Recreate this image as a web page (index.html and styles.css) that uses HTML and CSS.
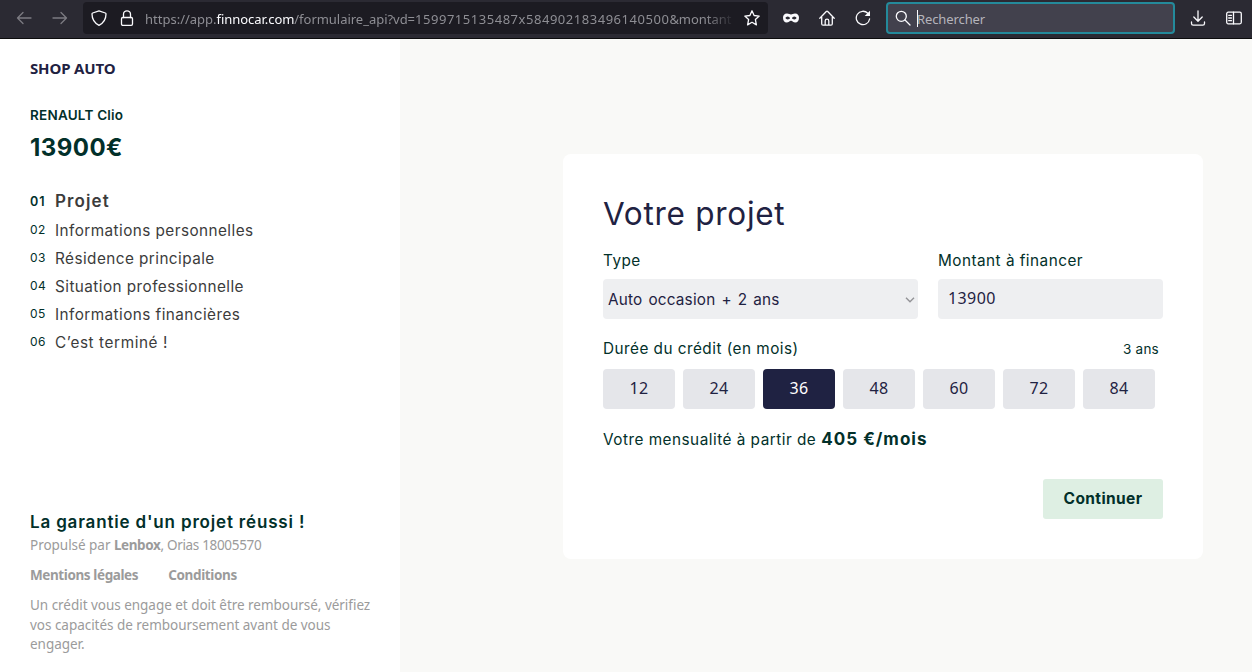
FILE: index.html
```html
<!DOCTYPE html>
<html lang="fr">
<head>
<meta charset="utf-8">
<title>Votre projet</title>
<link rel="stylesheet" href="styles.css">
</head>
<body>
<header class="toolbar">
  <svg class="icon back" viewBox="0 0 16 16"><path d="M15 8H1.5M7 2.5 1.5 8 7 13.5"/></svg>
  <svg class="icon forward" viewBox="0 0 16 16"><path d="M1 8h13.5M9 2.5 14.5 8 9 13.5"/></svg>
  <div class="urlbar">
    <svg class="icon shield" viewBox="0 0 16 16"><path d="M8 .8 14.3 3c.5.2.7.5.7 1C15 9 12.500 13 8 15.300 3.500 13 1 9 1 4c0-.5.2-.8.7-1z"/></svg>
    <svg class="icon lock" viewBox="0 0 16 16"><rect x="2.500" y="7.500" width="11" height="7.800" rx="1.300"/><path d="M4.500 7.500V4.300a3.500 3.500 0 0 1 7 0v3.200"/></svg>
    <div class="url">https://app.<b>finnocar.com</b><span class="path">/formulaire_api?vd=</span><span class="digits">1599715135487x584902183496140500</span><span class="path">&amp;montant</span></div>
    <svg class="icon star" viewBox="0 0 16 16"><path d="M8 .8 10.100 5.500l5.100.6-3.800 3.500 1 5.300L8 12.300 3.600 14.900l1-5.300L.8 6.100l5.100-.6z"/></svg>
  </div>
  <svg class="icon mask" viewBox="0 0 16 16"><path fill-rule="evenodd" d="M4 3.500c1.800 0 2.800.9 4 .9s2.200-.9 4-.9c2.600 0 4 1.700 4 4.300 0 3-1.500 4.800-3.700 4.800-2 0-2.800-1.900-4.300-1.900s-2.300 1.900-4.300 1.900C1.500 12.600 0 10.800 0 7.800c0-2.600 1.400-4.300 4-4.300zM4.700 6.500c-1 0-2 .8-2.300 1.600.5.800 1.200 1.300 2.300 1.300s2-.5 2.300-1.200c-.3-.9-1.200-1.700-2.300-1.700zm6.600 0c-1.100 0-2 .8-2.300 1.700.3.700 1.200 1.200 2.300 1.200s1.800-.5 2.300-1.300c-.3-.8-1.300-1.600-2.300-1.600z"/></svg>
  <svg class="icon home" viewBox="0 0 16 16"><path d="M.8 8.200 7.300 1.500q.7-.6 1.400 0l6.500 6.700M2.700 7v6.700c0 .9.5 1.500 1.300 1.500h8c.8 0 1.300-.6 1.300-1.500V7M6.200 15V11a1.800 1.800 0 0 1 3.600 0v4"/></svg>
  <svg class="icon reload" viewBox="0 0 16 16"><path d="M14.600 9A6.700 6.700 0 1 1 12.800 3.300"/><path class="solid" d="M15 .8v5.300H9.700z"/></svg>
  <div class="searchbar">
    <svg class="icon lens" viewBox="0 0 16 16"><circle cx="6.300" cy="6.300" r="5"/><path d="M10 10l5 5"/></svg>
    <span class="caret"></span><span class="placeholder">Rechercher</span>
  </div>
  <svg class="icon download" viewBox="0 0 16 16"><path d="M8 .8v10M3.800 7 8 11.200 12.200 7M1.500 12v1.500c0 1 .6 1.700 1.700 1.700h9.600c1.100 0 1.700-.7 1.700-1.700V12"/></svg>
  <svg class="icon sidebar-toggle" viewBox="0 0 16 16"><rect x=".7" y="2.200" width="14.600" height="11.600" rx="1.500"/><path d="M7.500 2.200v11.600M2.700 5.300h2.800M2.700 8h2.800M2.700 10.700h2.800"/></svg>
</header>
<main class="page">
  <aside class="sidebar">
    <div class="shop">SHOP AUTO</div>
    <div class="car">RENAULT Clio</div>
    <div class="price">13900€</div>
    <ol class="steps">
      <li class="current"><span class="num">01</span><span class="label">Projet</span></li>
      <li><span class="num">02</span><span class="label">Informations personnelles</span></li>
      <li><span class="num">03</span><span class="label">Résidence principale</span></li>
      <li><span class="num">04</span><span class="label">Situation professionnelle</span></li>
      <li><span class="num">05</span><span class="label">Informations financières</span></li>
      <li><span class="num">06</span><span class="label">C’est terminé !</span></li>
    </ol>
    <footer class="legal">
      <div class="slogan">La garantie d'un projet réussi !</div>
      <div class="powered">Propulsé par <b>Lenbox</b><span class="orias">, Orias 18005570</span></div>
      <nav class="links"><a>Mentions légales</a><a>Conditions</a></nav>
      <p class="warning">Un crédit vous engage et doit être remboursé, vérifiez vos capacités de remboursement avant de vous engager.</p>
    </footer>
  </aside>
  <section class="content">
    <form class="card">
      <h1>Votre projet</h1>
      <div class="fields">
        <div class="field">
          <label>Type</label>
          <div class="control select"><span>Auto occasion + 2 ans</span><svg class="chevron" viewBox="0 0 10 6"><path d="M1 .8l4 4 4-4"/></svg></div>
        </div>
        <div class="field">
          <label class="amount-label">Montant à financer</label>
          <div class="control amount">13900</div>
        </div>
      </div>
      <div class="duration"><label>Durée du crédit (en mois)</label><span class="years">3 ans</span></div>
      <div class="months">
        <span class="month">12</span><span class="month">24</span><span class="month selected">36</span><span class="month">48</span><span class="month">60</span><span class="month">72</span><span class="month">84</span>
      </div>
      <div class="monthly"><span class="monthly-text">Votre mensualité à partir de</span><strong>405 €/mois</strong></div>
      <div class="actions"><span class="continue">Continuer</span></div>
    </form>
  </section>
</main>
</body>
</html>
```
FILE: styles.css
```css
* { box-sizing: border-box; }
body { margin: 0; height: 672px; overflow: hidden; background: #fff; font-family: Inter, sans-serif; font-size: 15.3px; letter-spacing: .47px; color: #02302a; }

/* Browser toolbar */
.toolbar { display: flex; align-items: center; height: 39px; padding: 0 9px 3px 16px; background: #2b2a33; border-bottom: 1px solid #0c0c0d; font-family: "Noto Sans", sans-serif; font-size: 13px; letter-spacing: 0; }
.icon { flex: none; width: 16px; height: 16px; fill: none; stroke: #fbfbfe; stroke-width: 1.3; stroke-linejoin: round; stroke-linecap: round; }
.back, .forward { stroke: #7c7b82; }
.forward { margin-left: 20px; }
.urlbar { display: flex; align-items: center; width: 685px; height: 32px; margin: 1px 0 0 15px; padding: 0 8px; background: #1c1b22; border-radius: 4px; }
.lock { margin-left: 12px; }
.url { width: 590px; margin: 1px 0 0 10px; white-space: nowrap; color: #8e8e94; -webkit-mask-image: linear-gradient(to right, #000 95%, transparent); mask-image: linear-gradient(to right, #000 95%, transparent); }
.url b { font-weight: 400; letter-spacing: -.05px; color: #fbfbfe; }
.path { letter-spacing: -.03px; }
.digits { letter-spacing: .53px; }
.star { margin-left: 9px; }
.mask { margin-left: 15px; fill: #fbfbfe; stroke: none; }
.home { margin-left: 20px; }
.reload { margin-left: 20px; }
.solid { fill: #fbfbfe; stroke: none; }
.searchbar { display: flex; align-items: center; width: 289px; height: 32px; margin: 1px 0 0 15px; padding-left: 7px; background: #42414d; border: 2px solid #248a9b; border-radius: 4px; color: #b5b4bb; }
.caret { width: 1px; height: 17px; margin-left: 6px; background: #fbfbfe; }
.placeholder { margin: 1px 0 0 -1px; letter-spacing: -.1px; }
.download { margin-left: 15px; }
.sidebar-toggle { margin-left: 20px; }

.page { display: flex; height: 633px; }

/* Left column */
.sidebar { display: flex; flex-direction: column; width: 400px; padding: 19px 29px 0 30px; }
.shop { font: 700 15px/20px "Noto Sans", sans-serif; letter-spacing: -.15px; color: #1f2242; }
.car { margin-top: 27px; font-size: 13.5px; font-weight: 600; line-height: 20px; letter-spacing: .22px; }
.price { margin-top: 7px; font-size: 24px; font-weight: 700; line-height: 32px; letter-spacing: .46px; }
.steps { margin: 23px 0 0; padding: 0; list-style: none; }
.steps li { display: flex; align-items: center; height: 28px; }
.steps .current { height: 29px; }
.num { width: 25px; font-size: 12px; letter-spacing: .5px; padding-bottom: 1px; }
.label { color: #3c3c3c; letter-spacing: .44px; }
.steps li:last-child .label { letter-spacing: .6px; }
.current .num { font-size: 12.5px; font-weight: 600; letter-spacing: 1px; padding: 0; }
.current .label { font-size: 17px; font-weight: 600; letter-spacing: 1.1px; line-height: 20px; padding-bottom: 1px; }
.legal { margin-top: auto; padding-bottom: 17px; font-family: "Noto Sans", sans-serif; font-size: 13.5px; letter-spacing: -.03px; color: #9b9b9b; }
.slogan { font: 600 17px/24px Inter, sans-serif; letter-spacing: .83px; white-space: nowrap; color: #02302a; }
.powered { margin-top: 1px; line-height: 20px; }
.powered b, .links { font-weight: 700; letter-spacing: -.4px; }
.orias { letter-spacing: -.32px; }
.links { display: flex; gap: 30px; margin-top: 10px; line-height: 20px; }
.links a:last-child { letter-spacing: -.35px; }
.warning { margin: 11px 0 0; line-height: 19.6px; }

/* Form */
.content { width: 852px; padding: 115px 0 0 163px; background: #f9f9f7; }
.card { width: 640px; height: 405px; padding: 41px 40px 39px; background: #fff; border-radius: 8px; }
h1 { margin: 0; font-size: 31.5px; font-weight: 400; line-height: 38px; letter-spacing: .72px; color: #1f2242; }
.fields { display: grid; grid-template-columns: 315px 225px; gap: 20px; margin-top: 18px; }
label { display: block; line-height: 20px; letter-spacing: .48px; }
.control { display: flex; align-items: center; height: 40px; margin-top: 8px; background: #eeeff1; border-radius: 4px; color: #1f2242; }
.select { justify-content: space-between; padding: 1px 3px 0 5px; letter-spacing: .2px; word-spacing: 1.5px; }
.chevron { width: 10px; height: 6px; fill: none; stroke: #939397; stroke-width: 1.4; }
.amount { padding: 0 0 2px 10px; font: 400 16px "Noto Sans", sans-serif; letter-spacing: .4px; }
.duration { display: flex; justify-content: space-between; margin-top: 20px; padding-right: 4px; }
.years { font-size: 13.5px; line-height: 21px; letter-spacing: .25px; }
.months { display: flex; gap: 8px; margin-top: 9px; }
.month { width: 72px; height: 40px; background: #e5e6ea; border-radius: 4px; font: 400 16px/39px "Noto Sans", sans-serif; letter-spacing: .3px; text-align: center; color: #1f2242; }
.selected { background: #1f2242; color: #fff; }
.monthly { display: flex; align-items: baseline; gap: 5px; margin-top: 18px; line-height: 24px; letter-spacing: .5px; }
.monthly strong { font-size: 17px; font-weight: 700; letter-spacing: 1px; }
.actions { display: flex; justify-content: flex-end; margin-top: 27px; }
.continue { width: 120px; height: 40px; background: #deefe3; border-radius: 3px; font-size: 15.5px; font-weight: 700; line-height: 39px; letter-spacing: .4px; text-align: center; }
```
